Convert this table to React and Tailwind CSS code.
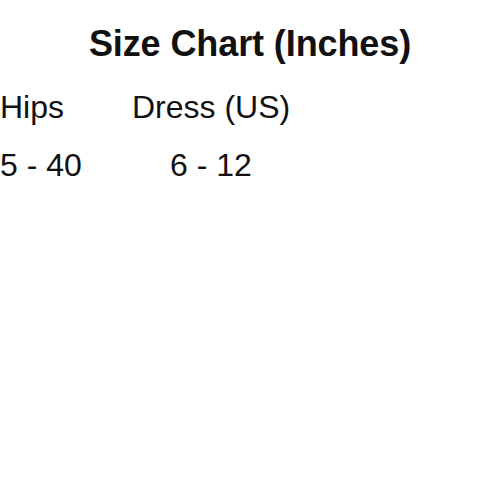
import React from 'react';

const rows = [['5 - 40', '6 - 12']];

export default function App() {
  return (
    <div className="w-[500px] h-[500px] bg-white text-[#111] font-['Liberation_Sans',Arial,sans-serif] overflow-hidden">
      <h1 className="pt-[24px] text-center text-[36px] font-bold leading-[40px] tracking-[-0.1px]">Size Chart (Inches)</h1>
      <div className="mt-[25px] flex whitespace-nowrap text-[32px] leading-[37px]">
        <div className="w-[132px] shrink-0">Hips</div>
        <div className="w-[158px] shrink-0 text-center">Dress (US)</div>
      </div>
      {rows.map((r) => (
        <div key={r[0]} className="mt-[21px] flex whitespace-nowrap text-[32px] leading-[37px]">
          <div className="w-[132px] shrink-0">{r[0]}</div>
          <div className="w-[158px] shrink-0 text-center">{r[1]}</div>
        </div>
      ))}
    </div>
  );
}
